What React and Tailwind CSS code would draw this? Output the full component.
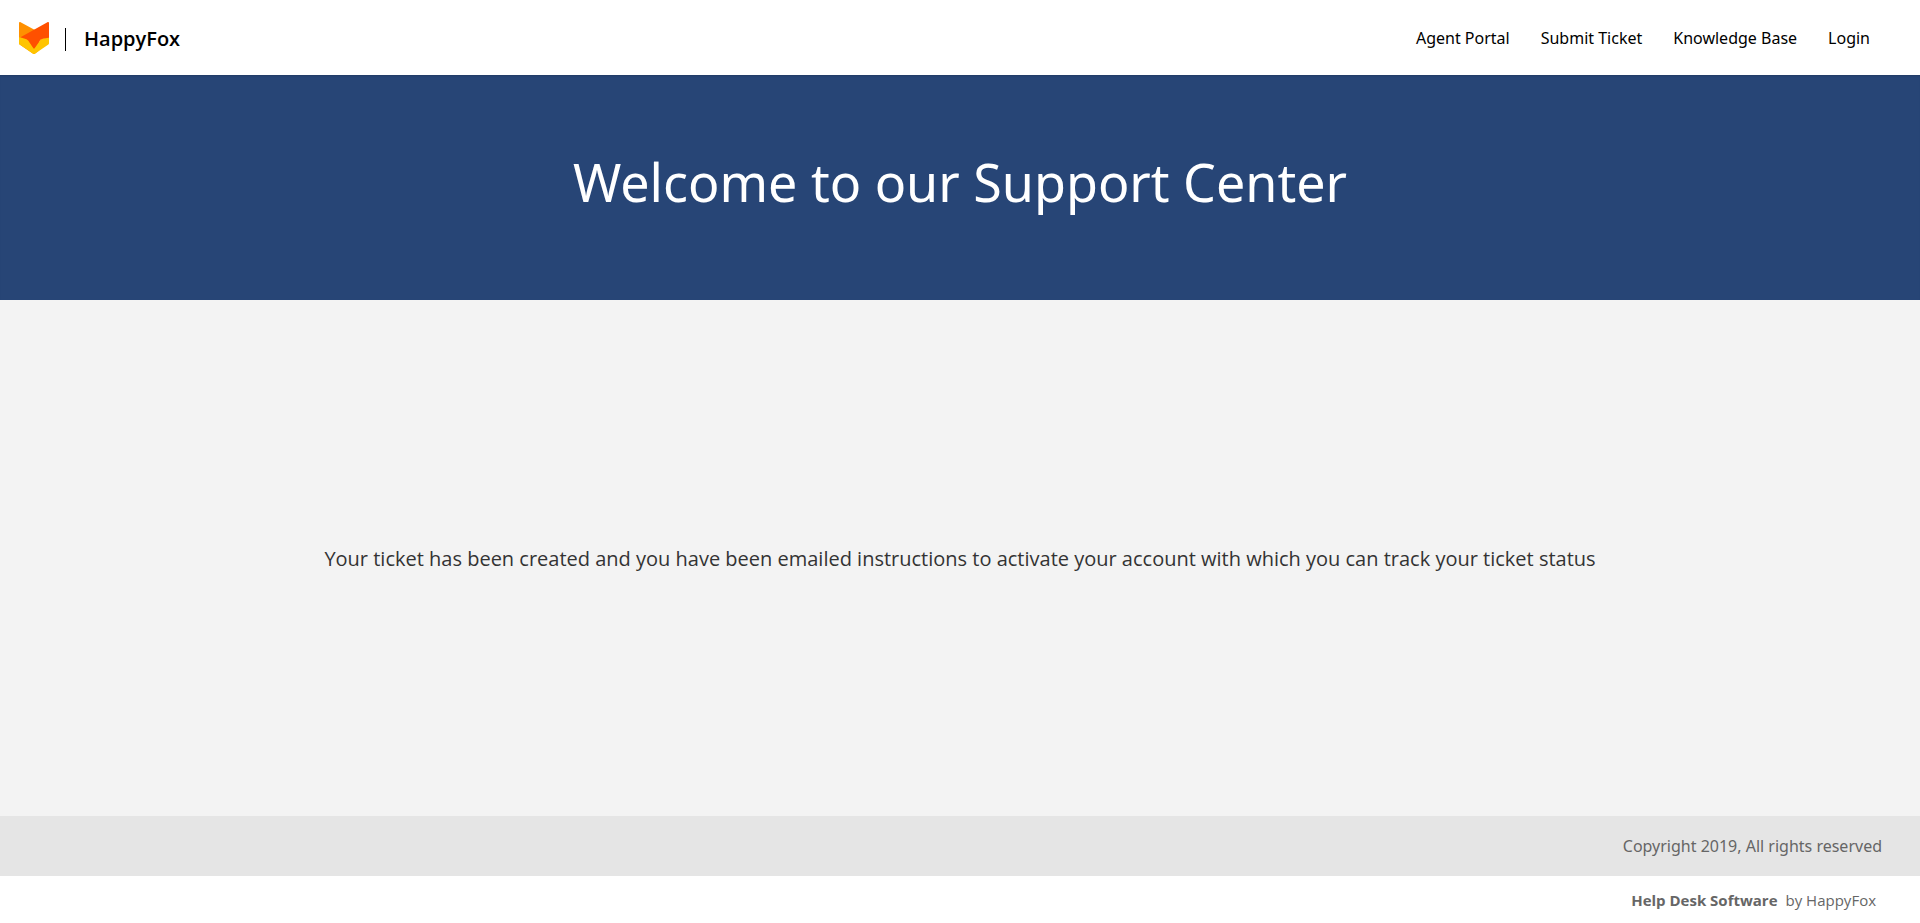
const links = ["Agent Portal", "Submit Ticket", "Knowledge Base", "Login"];

function FoxLogo() {
  return (
    <svg viewBox="0 0 30 32" className="h-8 w-[30px]" aria-hidden="true">
      <path d="M0 1.2C0 .2.8-.2 1.6.3L15 7.5 20 9V28.5L15.9 31.7Q15 32.3 14.1 31.7L.6 22.4Q0 22 0 21.2Z" fill="#ff9000" />
      <path d="M0 15.2L8 17 15 26.5 22 17 30 15V21.2Q30 22 29.4 22.4L15.9 31.7Q15 32.3 14.1 31.7L.6 22.4Q0 22 0 21.2Z" fill="#ffc400" />
      <path d="M1.5 15.2L28.4.3C29.2-.2 30 .2 30 1.2V15.8C25 16.5 22.5 16.7 21 18.4L15.8 26Q15 27 14.2 26L9.5 18.8C8 17 6 16.8 1.5 15.2Z" fill="#ff5000" />
    </svg>
  );
}

export default function App() {
  return (
    <div className="flex min-h-screen flex-col bg-white font-['Open_Sans',sans-serif] text-black">
      <header className="flex h-[75px] items-center justify-between pr-[50px] pl-[19px]">
        <a href="#home" className="flex items-center">
          <FoxLogo />
          <span className="mt-1 ml-4 h-[23px] w-px bg-black" />
          <span className="mt-[2px] ml-[18px] text-xl font-semibold">HappyFox</span>
        </a>
        <nav className="flex gap-[31px]">
          {links.map((label) => (
            <a key={label} href="#nav" className="font-['Noto_Sans',sans-serif] text-base">{label}</a>
          ))}
        </nav>
      </header>
      <section className="flex h-[225px] justify-center bg-[#274576] pt-[72px] shadow-[inset_0_2px_2px_-1px_rgba(0,0,0,0.15)]">
        <h1 className="font-['Noto_Sans',sans-serif] text-[52px] leading-[70px] text-white">Welcome to our Support Center</h1>
      </section>
      <main className="flex grow items-center justify-center bg-[#f3f3f3] px-5 pt-[2px] text-center">
        <p className="text-xl text-[#333333]">
          Your ticket has been created and you have been emailed instructions to activate your account with which you can track your ticket status
        </p>
      </main>
      <footer className="text-right text-[#666666]">
        <p className="bg-[#e5e5e5] pr-[38px] font-['Noto_Sans',sans-serif] text-base leading-[60px]">Copyright 2019, All rights reserved</p>
        <p className="flex h-[47px] items-center justify-end gap-2 pt-[2px] pr-11 text-[15px]">
          <a href="#software" className="font-bold">Help Desk Software</a>
          <span>by HappyFox</span>
        </p>
      </footer>
    </div>
  );
}
